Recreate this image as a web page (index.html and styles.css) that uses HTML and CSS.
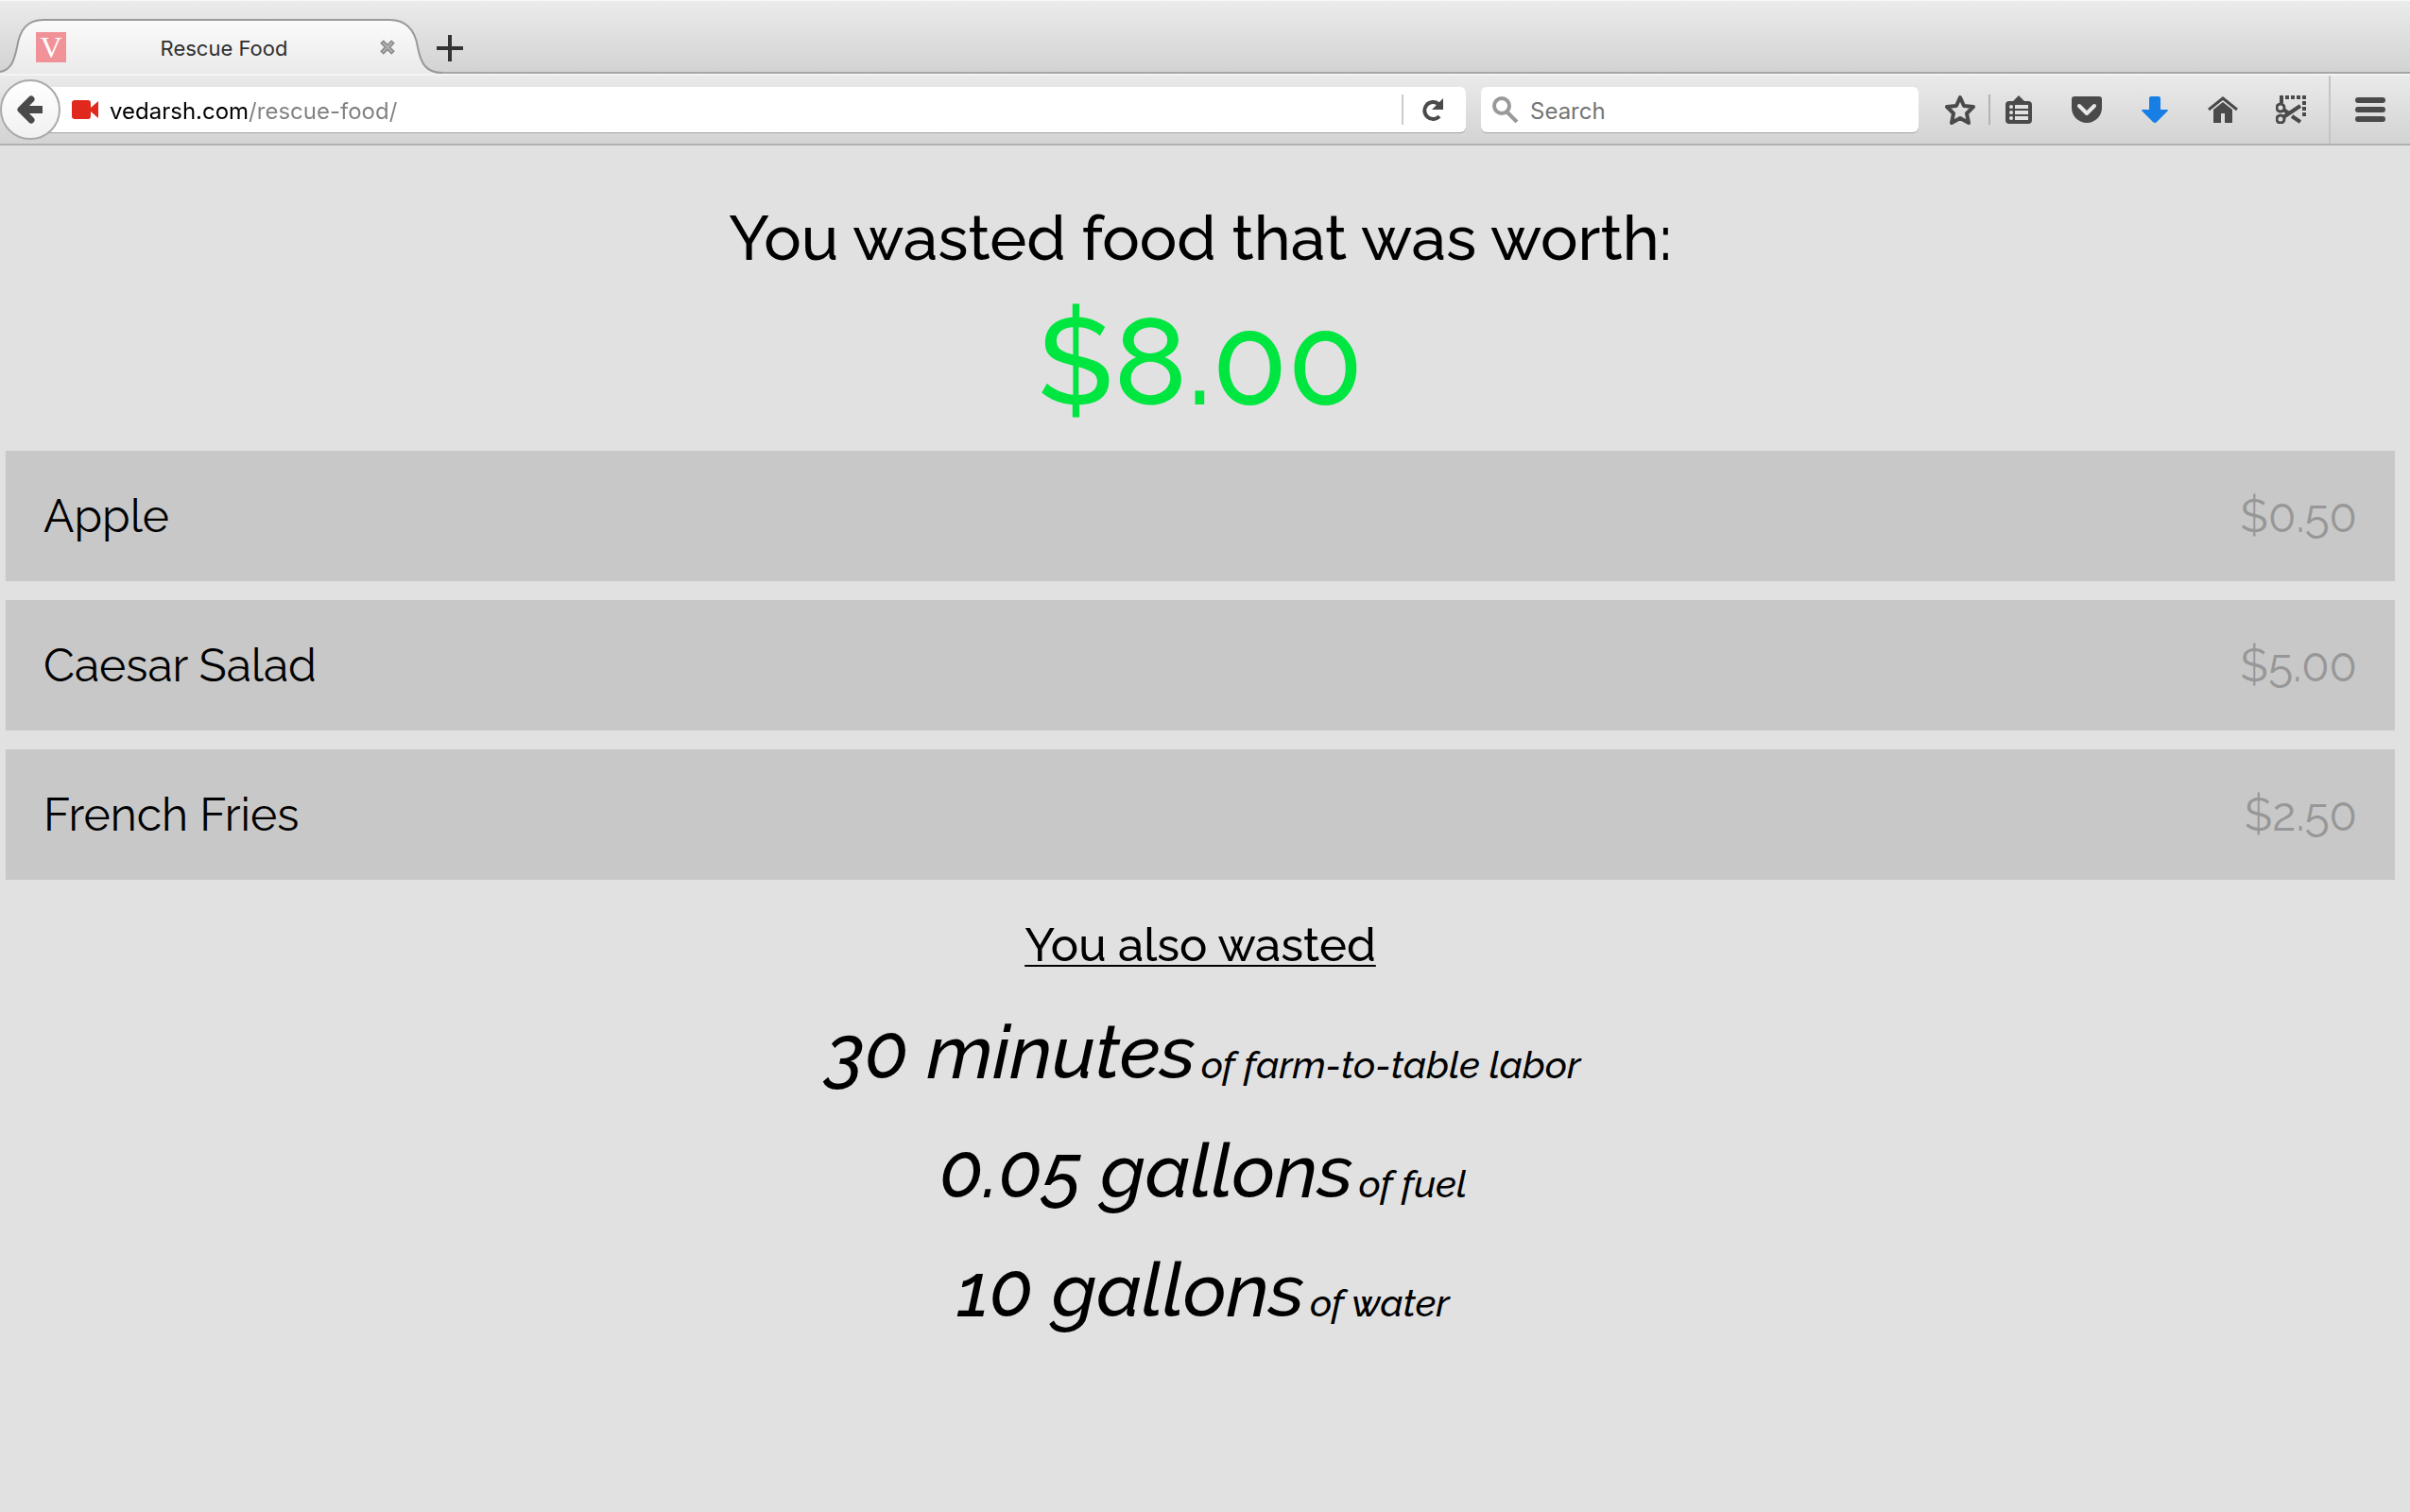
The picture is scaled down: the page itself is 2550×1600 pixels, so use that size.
FILE: index.html
```html
<!DOCTYPE html>
<html lang="en">
  <head>
    <meta charset="UTF-8" />
    <meta name="viewport" content="width=device-width, initial-scale=1.0" />
    <title>Rescue Food</title>
    <link rel="stylesheet" href="styles.css">
  </head>
  <body>
    <header class="browser">
      <div class="tabs">
        <div class="tab">
          <svg class="tab-shape" width="468" height="78" viewBox="0 0 468 78">
            <defs>
              <linearGradient id="tab-fill" x1="0" y1="0" x2="0" y2="1">
                <stop offset="0" stop-color="#fbfbfb" />
                <stop offset="1" stop-color="#eaeaea" />
              </linearGradient>
            </defs>
            <path fill="url(#tab-fill)" d="M0 78V76C12 74 15 64 18 50C21 31 29 21 46 21H412C430 21 439 31 442 50C445 66 450 77 466 77V78Z" />
            <path fill="none" stroke="#999" stroke-width="2" d="M0 76C12 74 15 64 18 50C21 31 29 21 46 21H412C430 21 439 31 442 50C445 66 450 77 468 77" />
          </svg>
          <span class="favicon">V</span>
          <span class="tab-title">Rescue Food</span>
          <button class="tab-close" type="button" aria-label="Close tab">
            <svg width="16" height="16" viewBox="0 0 16 16">
              <path fill="none" stroke="#888" stroke-width="5" d="M2 2L14 14M14 2L2 14" />
              <path fill="none" stroke="#b0b0b0" stroke-width="2" d="M3 3L13 13M13 3L3 13" />
            </svg>
          </button>
        </div>
        <button class="tab-new" type="button" aria-label="New tab">
          <svg width="28" height="28" viewBox="0 0 28 28">
            <path fill="none" stroke="#333" stroke-width="4" d="M14 0V28M0 14H28" />
          </svg>
        </button>
      </div>

      <nav class="toolbar">
        <button class="back" type="button" aria-label="Back">
          <svg width="30" height="32" viewBox="0 0 30 32">
            <path fill="none" stroke="#4a4a4a" stroke-width="7" stroke-linecap="round" stroke-linejoin="round" d="M16 5L5 16L16 27" />
            <path fill="none" stroke="#4a4a4a" stroke-width="8" d="M6 16H28" />
          </svg>
        </button>
        <div class="url">
          <svg width="28" height="20" viewBox="0 0 28 20">
            <rect width="20" height="20" rx="3" fill="#e0281c" />
            <path fill="#e0281c" d="M20 8L28 1V19L20 12Z" />
          </svg>
          <input class="url-input" type="text" aria-label="Address" value="vedarsh.com/rescue-food/" />
          <button class="reload" type="button" aria-label="Reload">
            <svg width="22" height="24" viewBox="0 0 22 24">
              <path fill="none" stroke="#4a4a4a" stroke-width="4" d="M17 6A9 9 0 1 0 18 19" />
              <path fill="#4a4a4a" d="M22 0V12H10Z" />
            </svg>
          </button>
        </div>
        <div class="search">
          <svg width="28" height="28" viewBox="0 0 28 28">
            <circle cx="10" cy="10" r="8" fill="none" stroke="#999" stroke-width="4" />
            <path stroke="#999" stroke-width="4" d="M15 16L26 27" />
          </svg>
          <input class="search-input" type="text" aria-label="Search" placeholder="Search" />
        </div>
        <div class="tools">
          <button class="tool star" type="button" aria-label="Bookmark">
            <svg width="32" height="32" viewBox="0 0 32 32">
              <path fill="none" stroke="#4a4a4a" stroke-width="4" stroke-linejoin="round" d="M16 3L20 12L30 13L23 20L25 30L16 25L7 30L9 20L2 13L12 12Z" />
            </svg>
          </button>
          <button class="tool" type="button" aria-label="Bookmarks list">
            <svg width="28" height="30" viewBox="0 0 28 30">
              <path fill="#4a4a4a" d="M4 6H8L14 0L20 6H24Q28 6 28 10V26Q28 30 24 30H4Q0 30 0 26V10Q0 6 4 6Z" />
              <path stroke="#e2e2e2" stroke-width="4" d="M10 12H24M10 18H24M10 24H24" />
              <g fill="#e2e2e2">
                <circle cx="6" cy="12" r="2" />
                <circle cx="6" cy="18" r="2" />
                <circle cx="6" cy="24" r="2" />
              </g>
            </svg>
          </button>
          <button class="tool" type="button" aria-label="Save to Pocket">
            <svg width="32" height="28" viewBox="0 0 32 28">
              <path fill="#4a4a4a" d="M3 0H29Q32 0 32 3V12A16 16 0 0 1 0 12V3Q0 0 3 0Z" />
              <path fill="none" stroke="#e8e8e8" stroke-width="4" stroke-linecap="round" stroke-linejoin="round" d="M8 10L16 18L24 10" />
            </svg>
          </button>
          <button class="tool" type="button" aria-label="Downloads">
            <svg width="28" height="28" viewBox="0 0 28 28">
              <path fill="#177ee6" d="M10 0H18Q20 0 20 2V14H27Q29 14 27 16L16 27Q14 29 12 27L1 16Q-1 14 1 14H8V2Q8 0 10 0Z" />
            </svg>
          </button>
          <button class="tool" type="button" aria-label="Home">
            <svg width="32" height="28" viewBox="0 0 32 28">
              <path fill="none" stroke="#4a4a4a" stroke-width="3" d="M1 14L16 2L31 14" />
              <path fill="#4a4a4a" d="M16 6L26 14V28H18V18H14V28H6V14Z" />
            </svg>
          </button>
          <button class="tool" type="button" aria-label="Screenshot">
            <svg width="32" height="30" viewBox="0 0 32 30">
              <path fill="none" stroke="#4a4a4a" stroke-width="4" stroke-dasharray="4 2" d="M4 2H32" />
              <path fill="none" stroke="#4a4a4a" stroke-width="4" stroke-dasharray="4 2" d="M30 6V22M6 4V8" />
              <g fill="none" stroke="#4a4a4a">
                <circle cx="5" cy="13" r="4" stroke-width="3" />
                <circle cx="5" cy="25" r="4" stroke-width="3" />
                <path stroke-width="4" d="M8 23L26 11M8 15L14 19M17 22L26 28" />
              </g>
            </svg>
          </button>
          <button class="tool menu" type="button" aria-label="Menu">
            <svg width="32" height="26" viewBox="0 0 32 26">
              <path stroke="#4a4a4a" stroke-width="6" stroke-linecap="round" d="M3 3H29M3 13H29M3 23H29" />
            </svg>
          </button>
        </div>
      </nav>
    </header>

    <main>
      <h1>You wasted food that was worth:</h1>
      <p class="total">$8.00</p>
      <ul class="items">
        <li class="item"><span>Apple</span><span class="price">$0.50</span></li>
        <li class="item"><span>Caesar Salad</span><span class="price">$5.00</span></li>
        <li class="item"><span>French Fries</span><span class="price">$2.50</span></li>
      </ul>
      <h2>You also wasted</h2>
      <p class="waste">30 minutes<small> of farm-to-table labor</small></p>
      <p class="waste">0.05 gallons<small> of fuel</small></p>
      <p class="waste">10 gallons<small> of water</small></p>
    </main>
  </body>
</html>
```
FILE: styles.css
```css
:root {
  --page-color: #e1e1e1;
  --item-color: #c8c8c8;
  --price-color: #979797;
  --total-color: #00e640;
  --ui-font: Inter, "Liberation Sans", sans-serif;
  --page-font: Raleway, Lato, sans-serif;
}

*,
*::before,
*::after {
  box-sizing: border-box;
}

body {
  margin: 0;
  background-color: var(--page-color);
  color: #000;
  font-family: var(--page-font);
}

button {
  display: flex;
  align-items: center;
  justify-content: center;
  padding: 0;
  border: 0;
  background: none;
}

svg {
  display: block;
  flex: none;
}

/* browser */
.browser {
  font-family: var(--ui-font);
}

.tabs {
  display: flex;
  height: 78px;
  border-top: 1px solid #f8f8f8;
  border-bottom: 2px solid #a6a6a6;
  background: linear-gradient(#ebebeb, #d3d3d3);
}

.tab {
  position: relative;
  display: flex;
  align-items: center;
  width: 456px;
  height: 78px;
  margin-top: -1px;
  padding: 22px 36px 0 38px;
}

.tab-shape {
  position: absolute;
  top: 0;
  left: 0;
}

.favicon {
  position: relative;
  width: 32px;
  height: 32px;
  background-color: #f19299;
  color: #fff;
  font: 32px/32px "Liberation Serif", serif;
  text-align: center;
}

.tab-title {
  position: relative;
  flex: 1;
  padding: 2px 0 0 4px;
  color: #2f2f2f;
  font-size: 22px;
  text-align: center;
}

.tab-close {
  position: relative;
  width: 20px;
}

.tab-new {
  width: 40px;
  padding-top: 24px;
}

.toolbar {
  display: flex;
  align-items: center;
  height: 76px;
  border-top: 2px solid #f4f4f4;
  border-bottom: 2px solid #b0b0b0;
  background: linear-gradient(#eaeaea, #d3d3d3);
}

.back {
  z-index: 1;
  width: 64px;
  height: 64px;
  border: 2px solid #aaa;
  border-radius: 50%;
  background: linear-gradient(#fff, #f1f1f1);
}

.url,
.search {
  display: flex;
  align-items: center;
  height: 48px;
  border-radius: 6px;
  background-color: #fff;
  box-shadow: 0 1px 0 #a4a4a4;
}

.url {
  flex: 1;
  margin-left: -34px;
  padding-left: 46px;
}

.search {
  width: 463px;
  margin: 0 14px 0 16px;
  padding: 0 12px;
}

.url-input,
.search-input {
  flex: 1;
  min-width: 0;
  height: 48px;
  padding: 2px 12px 0;
  border: 0;
  outline: 0;
  background: none;
  font-family: var(--ui-font);
  font-size: 24px;
}

/* the host is black, the path grey */
.url-input {
  background: linear-gradient(90deg, #000 158px, #808080 158px);
  -webkit-background-clip: text;
  background-clip: text;
  -webkit-text-fill-color: transparent;
}

.search-input::placeholder {
  color: #757575;
}

.reload {
  width: 68px;
  height: 32px;
  padding-right: 4px;
  border-left: 2px solid #ccc;
}

.tools {
  display: flex;
  height: 72px;
}

.tool {
  width: 72px;
}

.star {
  width: 60px;
  margin-right: -4px;
}

.star + .tool {
  position: relative;
}

.star + .tool::before {
  content: "";
  position: absolute;
  left: 4px;
  width: 2px;
  height: 32px;
  background-color: #b3b3b3;
}

.menu {
  width: 86px;
  margin-left: 4px;
  border-left: 2px solid #c4c4c4;
}

/* page */
main {
  padding: 58px 16px 0 6px;
  font-weight: 500;
  text-align: center;
}

h1 {
  margin: 0;
  font-size: 66px;
  font-weight: 500;
  line-height: 80px;
}

.total {
  margin: 10px 0 15px;
  color: var(--total-color);
  font-size: 130px;
  line-height: 160px;
}

.items {
  display: flex;
  flex-direction: column;
  gap: 20px;
  margin: 0;
  padding: 0;
  list-style: none;
}

.item {
  display: flex;
  align-items: center;
  justify-content: space-between;
  height: 138px;
  padding: 0 40px;
  background-color: var(--item-color);
  font-size: 48px;
  font-weight: 400;
}

.price {
  color: var(--price-color);
}

h2 {
  margin: 39px 0 20px;
  font-size: 49px;
  font-weight: 500;
  line-height: 60px;
  text-decoration: underline;
  text-decoration-thickness: 2px;
  text-underline-offset: 4px;
}

.waste {
  margin: 0;
  padding-left: 6px;
  font-size: 79px;
  font-style: italic;
  line-height: 126px;
}

.waste small {
  margin-left: -4px;
  font-size: 40px;
  line-height: 40px;
}
```
